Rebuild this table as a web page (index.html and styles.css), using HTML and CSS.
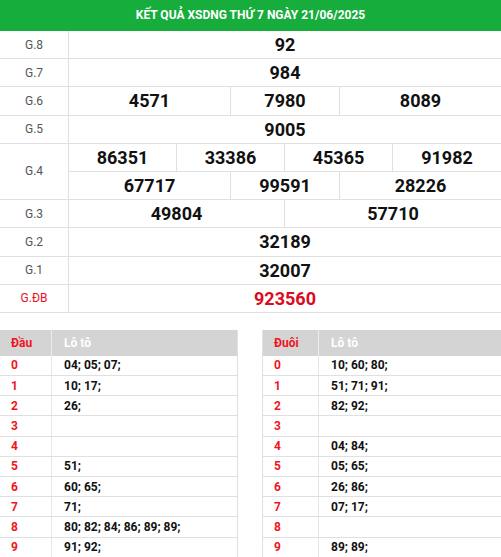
FILE: index.html
```html
<!DOCTYPE html>
<html lang="vi">
<head>
<meta charset="utf-8">
<link rel="stylesheet" href="styles.css">
</head>
<body>
<div class="title">KẾT QUẢ XSDNG THỨ 7 NGÀY 21/06/2025</div>
<div class="results">
  <div class="row"><div class="label">G.8</div><div class="nums c1"><div class="num">92</div></div></div>
  <div class="row"><div class="label">G.7</div><div class="nums c1"><div class="num">984</div></div></div>
  <div class="row"><div class="label">G.6</div><div class="nums c3"><div class="num">4571</div><div class="num">7980</div><div class="num">8089</div></div></div>
  <div class="row"><div class="label">G.5</div><div class="nums c1"><div class="num">9005</div></div></div>
  <div class="row double"><div class="label">G.4</div>
    <div class="stack">
      <div class="nums c4 sub"><div class="num">86351</div><div class="num">33386</div><div class="num">45365</div><div class="num">91982</div></div>
      <div class="nums c3"><div class="num">67717</div><div class="num">99591</div><div class="num">28226</div></div>
    </div>
  </div>
  <div class="row"><div class="label">G.3</div><div class="nums c2"><div class="num">49804</div><div class="num">57710</div></div></div>
  <div class="row"><div class="label">G.2</div><div class="nums c1"><div class="num">32189</div></div></div>
  <div class="row"><div class="label">G.1</div><div class="nums c1"><div class="num">32007</div></div></div>
  <div class="row"><div class="label red">G.ĐB</div><div class="nums c1"><div class="num special">923560</div></div></div>
</div>
<div class="loto">
  <div class="ltable left">
    <div class="lrow head"><div class="k">Đầu</div><div class="v">Lô tô</div></div>
    <div class="lrow"><div class="k">0</div><div class="v">04; 05; 07;</div></div>
    <div class="lrow"><div class="k">1</div><div class="v">10; 17;</div></div>
    <div class="lrow"><div class="k">2</div><div class="v">26;</div></div>
    <div class="lrow"><div class="k">3</div><div class="v"></div></div>
    <div class="lrow"><div class="k">4</div><div class="v"></div></div>
    <div class="lrow"><div class="k">5</div><div class="v">51;</div></div>
    <div class="lrow"><div class="k">6</div><div class="v">60; 65;</div></div>
    <div class="lrow"><div class="k">7</div><div class="v">71;</div></div>
    <div class="lrow"><div class="k">8</div><div class="v">80; 82; 84; 86; 89; 89;</div></div>
    <div class="lrow"><div class="k">9</div><div class="v">91; 92;</div></div>
  </div>
  <div class="ltable right">
    <div class="lrow head"><div class="k">Đuôi</div><div class="v">Lô tô</div></div>
    <div class="lrow"><div class="k">0</div><div class="v">10; 60; 80;</div></div>
    <div class="lrow"><div class="k">1</div><div class="v">51; 71; 91;</div></div>
    <div class="lrow"><div class="k">2</div><div class="v">82; 92;</div></div>
    <div class="lrow"><div class="k">3</div><div class="v"></div></div>
    <div class="lrow"><div class="k">4</div><div class="v">04; 84;</div></div>
    <div class="lrow"><div class="k">5</div><div class="v">05; 65;</div></div>
    <div class="lrow"><div class="k">6</div><div class="v">26; 86;</div></div>
    <div class="lrow"><div class="k">7</div><div class="v">07; 17;</div></div>
    <div class="lrow"><div class="k">8</div><div class="v"></div></div>
    <div class="lrow"><div class="k">9</div><div class="v">89; 89;</div></div>
  </div>
</div>
</body>
</html>
```
FILE: styles.css
```css
* { box-sizing: border-box; }
body {
  margin: 0;
  font-family: Roboto, "Liberation Sans", Arial, sans-serif;
  background: #fff;
  width: 501px;
  overflow: hidden;
}
.title {
  height: 31px;
  background: #17ad3c;
  color: #fff;
  font-weight: 700;
  font-size: 12px;
  text-align: center;
  line-height: 31px;
}
.results { display: flex; flex-direction: column; }
.row {
  display: flex;
  height: 28.2px;
  border-bottom: 1px solid #e0e0e0;
}
.row.double { height: 56.4px; }
.label {
  width: 69px;
  flex: none;
  border-right: 1px solid #e0e0e0;
  display: flex;
  align-items: center;
  justify-content: center;
  font-size: 12px;
  color: #555;
}
.label.red { color: #e8101e; }
.stack { flex: 1; display: flex; flex-direction: column; }
.stack .nums { flex: 1; }
.nums { flex: 1; display: grid; }
.nums.sub { border-bottom: 1px solid #e0e0e0; }
.c1 { grid-template-columns: 1fr; }
.c2 { grid-template-columns: 216px 1fr; }
.c3 { grid-template-columns: 162px 109px 1fr; }
.c4 { grid-template-columns: 108px 108px 108px 1fr; }
.num {
  display: flex;
  align-items: center;
  justify-content: center;
  font-size: 18px;
  font-weight: 700;
  color: #111;
  border-right: 1px solid #e0e0e0;
}
.num:last-child { border-right: none; }
.num.special { color: #dc0a1e; }
.loto {
  display: flex;
  justify-content: space-between;
  margin-top: 17px;
}
.ltable { width: 239px; }
.ltable.left { border-right: 1px solid #e0e0e0; width: 238px; }
.ltable.right { border-left: 1px solid #e0e0e0; }
.lrow {
  display: grid;
  grid-template-columns: 52px 1fr;
  height: 20.2px;
  border-bottom: 1px solid #e0e0e0;
  font-size: 12px;
  font-weight: 700;
}
.right .lrow { grid-template-columns: 56px 1fr; }
.lrow.head {
  height: 26px;
  background: #d4d4d4;
  border-bottom: none;
}
.k {
  padding-left: 11px;
  color: #f0141e;
  border-right: 1px solid #e6e6e6;
  display: flex;
  align-items: center;
}
.v {
  padding-left: 12px;
  color: #111;
  display: flex;
  align-items: center;
}
.head .v { color: #fff; }
.head .k { border-right-color: #ececec; }
```
